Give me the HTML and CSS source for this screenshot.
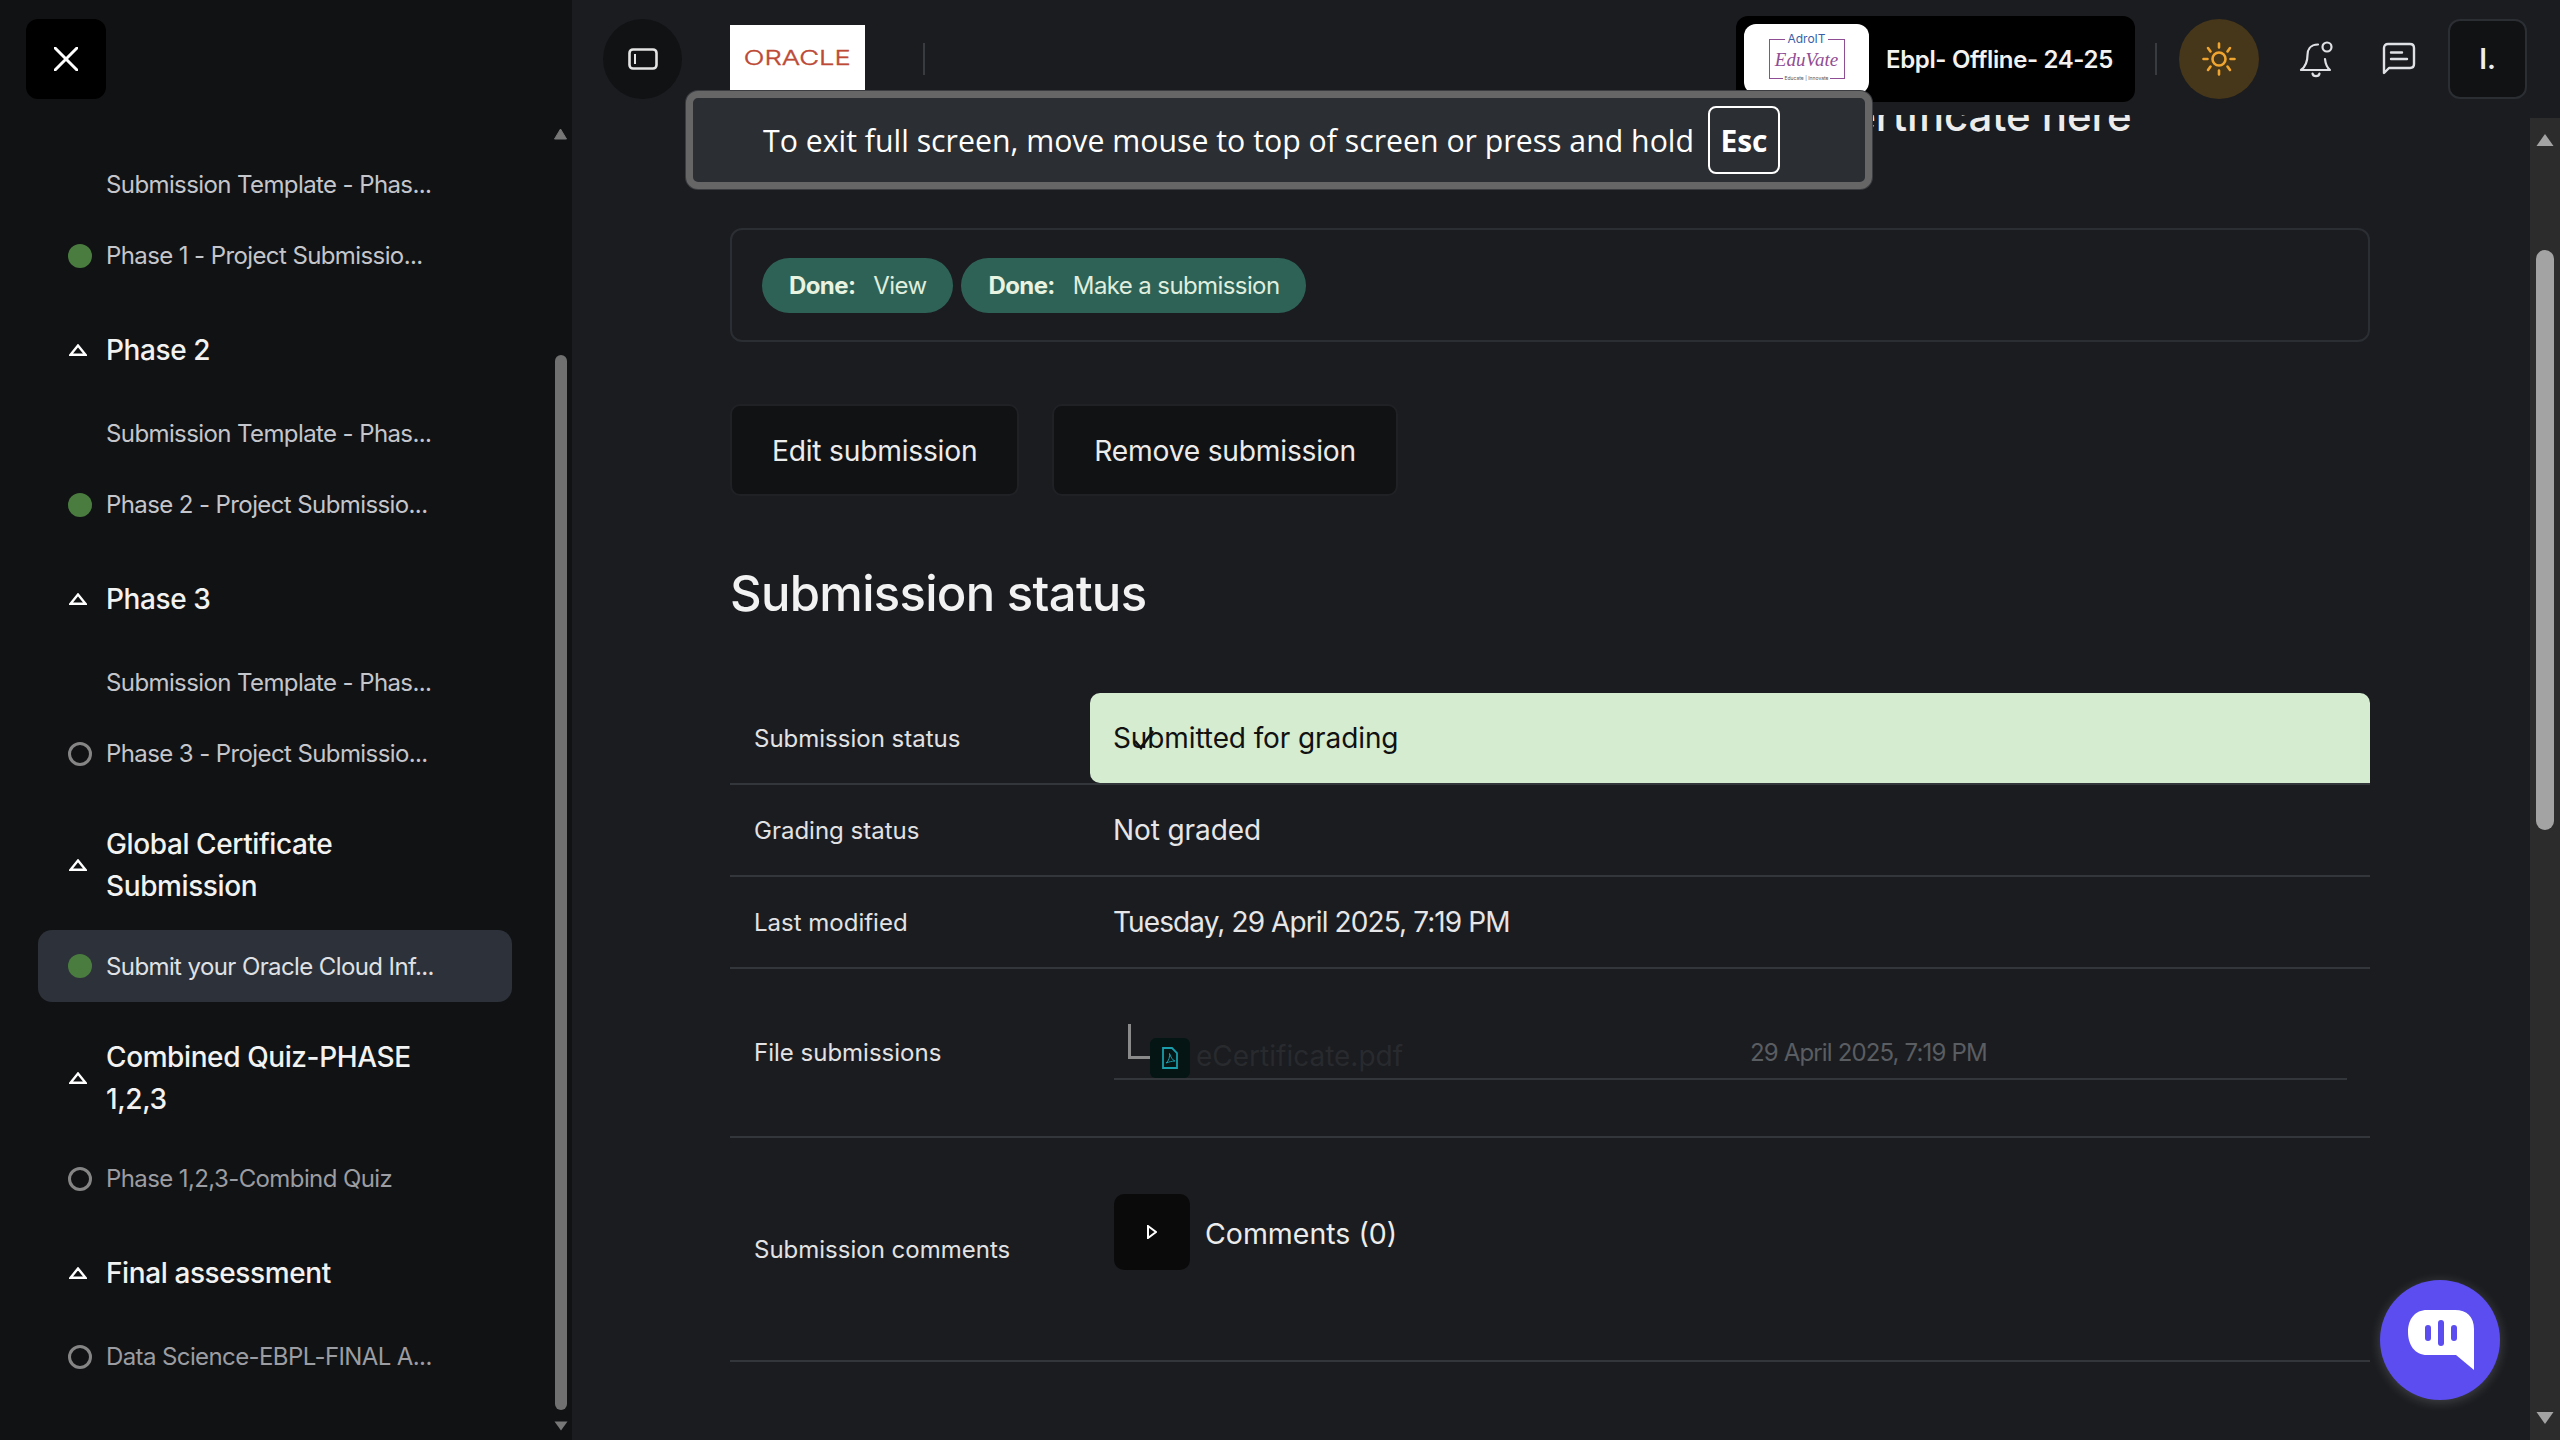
FILE: index.html
```html
<!DOCTYPE html>
<html lang="en">
<head>
<meta charset="utf-8">
<title>Submission</title>
<link rel="stylesheet" href="styles.css">
</head>
<body>
<div class="app">
  <aside class="sidebar">
    <div class="side-top">
      <button class="close-btn"><svg width="24" height="24" viewBox="0 0 24 24"><path d="M1 1 23 23M23 1 1 23" stroke="#fff" stroke-width="3" fill="none" stroke-linecap="round"/></svg></button>
    </div>
    <div class="side-body">
      <nav class="nav">
        <div class="item"><span class="dot blank"></span><span>Submission Template - Phas...</span></div>
        <div class="item"><span class="dot done"></span><span>Phase 1 - Project Submissio...</span></div>
        <div class="section"><svg class="caret" width="18" height="12" viewBox="0 0 18 12"><path d="M9 1.500 16.500 10.700H1.500Z" fill="none" stroke="#fff" stroke-width="2.400"/></svg><span class="section-text">Phase 2</span></div>
        <div class="item"><span class="dot blank"></span><span>Submission Template - Phas...</span></div>
        <div class="item"><span class="dot done"></span><span>Phase 2 - Project Submissio...</span></div>
        <div class="section"><svg class="caret" width="18" height="12" viewBox="0 0 18 12"><path d="M9 1.500 16.500 10.700H1.500Z" fill="none" stroke="#fff" stroke-width="2.400"/></svg><span class="section-text">Phase 3</span></div>
        <div class="item"><span class="dot blank"></span><span>Submission Template - Phas...</span></div>
        <div class="item"><span class="dot todo"></span><span>Phase 3 - Project Submissio...</span></div>
        <div class="section"><svg class="caret" width="18" height="12" viewBox="0 0 18 12"><path d="M9 1.500 16.500 10.700H1.500Z" fill="none" stroke="#fff" stroke-width="2.400"/></svg><span class="section-text">Global Certificate Submission</span></div>
        <div class="item active"><span class="dot done"></span><span>Submit your Oracle Cloud Inf...</span></div>
        <div class="section"><svg class="caret" width="18" height="12" viewBox="0 0 18 12"><path d="M9 1.500 16.500 10.700H1.500Z" fill="none" stroke="#fff" stroke-width="2.400"/></svg><span class="section-text">Combined Quiz-PHASE 1,2,3</span></div>
        <div class="item dim"><span class="dot todo"></span><span>Phase 1,2,3-Combind Quiz</span></div>
        <div class="section"><svg class="caret" width="18" height="12" viewBox="0 0 18 12"><path d="M9 1.500 16.500 10.700H1.500Z" fill="none" stroke="#fff" stroke-width="2.400"/></svg><span class="section-text">Final assessment</span></div>
        <div class="item dim"><span class="dot todo"></span><span>Data Science-EBPL-FINAL A...</span></div>
      </nav>
      <div class="side-scroll">
        <svg width="13" height="12" viewBox="0 0 13 12"><path d="M6.500 1 12.500 11H.5Z" fill="#777" stroke="#777" stroke-linejoin="round"/></svg>
        <div class="side-thumb"></div>
        <svg class="arrow-down" width="14" height="10" viewBox="0 0 14 10"><path d="M.5 .5H13.500L7 9.500Z" fill="#777"/></svg>
      </div>
    </div>
  </aside>

  <div class="main">
    <header class="topbar">
      <button class="round-btn"><svg width="30" height="22" viewBox="0 0 30 22"><rect x="1.500" y="1.500" width="27" height="19" rx="3.500" fill="none" stroke="#e4e4e4" stroke-width="2.600"/><path d="M7 6V16" stroke="#e4e4e4" stroke-width="2"/></svg></button>
      <div class="oracle"><span class="oracle-word">ORACLE</span></div>
      <span class="vr"></span>
      <div class="spacer"></div>
      <div class="org">
        <div class="org-logo">
          <div class="logo-frame">
            <span class="logo-top">AdroIT</span>
            <span class="logo-main">EduVate</span>
            <span class="logo-sub">Educate | Innovate</span>
          </div>
        </div>
        <span class="org-name">Ebpl- Offline- 24-25</span>
      </div>
      <span class="vr vr-right"></span>
      <button class="sun"><svg width="34" height="34" viewBox="0 0 34 34" fill="none" stroke="#efa52f" stroke-width="2.600" stroke-linecap="round"><circle cx="17" cy="17" r="6.500"/><path d="M17 1.500V5.500M17 28.500V32.500M1.500 17H5.500M28.500 17H32.500M6 6 8.500 9.500M28 6 25.500 9.500M6 28 8.500 24.500M28 28 25.500 24.500"/></svg></button>
      <svg class="bell" width="36" height="38" viewBox="0 0 36 38" fill="none" stroke="#dfe1e5" stroke-width="2.200" stroke-linecap="round" stroke-linejoin="round"><path d="M20 4.500C12 4.500 9.500 10 9.500 15C9.500 22 7 27 3 30H32C29 27.500 27.500 24 27 19"/><circle cx="29" cy="7" r="4.500"/><path d="M14.500 33.500C15 37 21 37 21.500 33.500"/></svg>
      <svg class="chat" width="34" height="34" viewBox="0 0 34 34" fill="none" stroke="#dfe1e5" stroke-width="2.400" stroke-linecap="round" stroke-linejoin="round"><path d="M2 31V6C2 3.500 3.500 2 6 2H28C30.500 2 32 3.500 32 6V22C32 24.500 30.500 26 28 26H7Z"/><path d="M9 10.500H20M9 17H25"/></svg>
      <div class="avatar">I.</div>
    </header>

    <div class="page">
      <div class="content">
        <h1 class="title">Submit your Oracle Cloud Infrastructure Foundations eCertificate here</h1>
        <div class="activity">
          <span class="pill"><b>Done:</b> View</span>
          <span class="pill"><b>Done:</b> Make a submission</span>
        </div>
        <div class="actions">
          <button class="btn">Edit submission</button>
          <button class="btn">Remove submission</button>
        </div>
        <h2 class="subtitle">Submission status</h2>
        <div class="table">
          <div class="row r-status">
            <div class="label">Submission status</div>
            <div class="value ok">Submitted for grading<svg class="tick" width="22" height="20" viewBox="0 0 22 20"><path d="M2 11 8 18 20 1" fill="none" stroke="#111" stroke-width="2.600"/></svg></div>
          </div>
          <div class="row r-plain">
            <div class="label">Grading status</div>
            <div class="value">Not graded</div>
          </div>
          <div class="row r-plain">
            <div class="label">Last modified</div>
            <div class="value tight">Tuesday, 29 April 2025, 7:19 PM</div>
          </div>
          <div class="row r-file">
            <div class="label">File submissions</div>
            <div class="file-cell">
              <div class="file-line">
                <span class="tree"></span>
                <span class="file-icon"><svg width="16" height="22" viewBox="0 0 16 22" fill="none" stroke="#1a9cab" stroke-width="1.800"><path d="M1 1H10L15 6V21H1Z"/><path d="M4 16C7 14 8 9 7.500 6.500C9 10 10 13 13 14C10 14 7 15 4 16Z" stroke-width="1"/></svg></span>
                <span class="file-name">eCertificate.pdf</span>
                <span class="file-date">29 April 2025, 7:19 PM</span>
              </div>
            </div>
          </div>
          <div class="row r-comments">
            <div class="label">Submission comments</div>
            <div class="comments">
              <span class="toggle"><svg width="10" height="14" viewBox="0 0 10 14"><path d="M1 1 9 7 1 13Z" fill="none" stroke="#fff" stroke-width="2"/></svg></span>
              <span class="comments-text">Comments (0)</span>
            </div>
          </div>
        </div>
      </div>
      <div class="page-scroll">
        <svg width="18" height="14" viewBox="0 0 18 14"><path d="M9 1 17.500 13H.5Z" fill="#a3a3a3"/></svg>
        <div class="page-thumb"></div>
        <svg class="arrow-down" width="18" height="14" viewBox="0 0 18 14"><path d="M.5 1H17.500L9 13Z" fill="#a3a3a3"/></svg>
      </div>
    </div>
  </div>
</div>

<div class="fs-banner">
  <span>To exit full screen, move mouse to top of screen or press and hold</span>
  <kbd class="esc">Esc</kbd>
</div>

<button class="fab"><svg width="68" height="62" viewBox="0 0 68 62"><path d="M20 1H48C60 1 67 8 67 20V61L49 46H20C8 46 1 36 1 23C1 10 8 1 20 1Z" fill="#fff"/><rect x="18" y="16" width="6" height="16" rx="3" fill="#5b4df0"/><rect x="31" y="11" width="6" height="26" rx="3" fill="#5b4df0"/><rect x="44" y="16" width="6" height="16" rx="3" fill="#5b4df0"/></svg></button>
</body>
</html>
```
FILE: styles.css
```css
* { box-sizing: border-box; }
html, body { margin: 0; padding: 0; }
body { width: 2560px; height: 1440px; overflow: hidden; background: #1a1c20; font-family: Inter, "Noto Sans", sans-serif; color: #e8e8e8; position: relative; }
button { font-family: inherit; border: 0; padding: 0; }
svg { display: block; flex: none; }

.app { display: flex; width: 2560px; height: 1440px; }

.sidebar { width: 572px; flex: none; background: #111214; display: flex; flex-direction: column; }
.side-top { height: 118px; padding: 19px 0 0 26px; flex: none; }
.close-btn { width: 80px; height: 80px; background: #000; border-radius: 12px; display: flex; align-items: center; justify-content: center; }
.side-body { flex: 1; display: flex; min-height: 0; }
.nav { width: 474px; margin: 31px 0 0 38px; flex: none; }
.item { height: 71px; display: flex; align-items: center; gap: 14px; padding-left: 30px; font-size: 24px; letter-spacing: -0.6px; color: #c4c6cb; border-radius: 14px; }
.item.active { background: #2d3139; color: #dfe1e5; height: 72px; }
.item.dim { color: #9b9da2; }
.dot { width: 24px; height: 24px; border-radius: 50%; flex: none; }
.dot.done { background: #4a7c3f; }
.dot.todo { border: 3px solid #858585; }
.section { min-height: 50px; display: flex; align-items: center; gap: 19px; padding-left: 31px; margin: 34px 0 23px; font-size: 28px; font-weight: 500; line-height: 42px; letter-spacing: -0.4px; color: #f2f2f2; }
.section-text { width: 350px; }

.side-scroll { width: 13px; margin-left: 42px; display: flex; flex-direction: column; align-items: center; padding-top: 10px; height: 1316px; }
.side-thumb { width: 12px; height: 1055px; margin-top: 215px; background: #707070; border-radius: 6px; flex: none; }
.side-scroll .arrow-down { margin-top: 11px; }

.main { flex: 1; min-width: 0; display: flex; flex-direction: column; }
.topbar { height: 115px; flex: none; display: flex; align-items: center; padding: 0 33px 0 31px; position: relative; z-index: 2; background: #1a1c20; }
.topbar > * { margin-top: 3px; }
.topbar > .oracle { margin-top: 0; }
.round-btn { width: 79px; height: 80px; border-radius: 50%; background: #111214; display: flex; align-items: center; justify-content: center; }
.oracle { width: 135px; height: 66px; margin-left: 48px; background: #fff; display: flex; align-items: center; justify-content: center; }
.oracle-word { font-size: 20px; font-weight: 300; color: #bd4a36; display: inline-block; transform: scaleX(1.36); -webkit-text-stroke: 0.4px #bd4a36; }
.vr { width: 2px; height: 32px; background: #383b40; margin-left: 58px; flex: none; }
.spacer { flex: 1; }
.org { width: 399px; height: 86px; background: #000; border-radius: 12px; display: flex; align-items: center; padding-left: 8px; gap: 16px; }
.org-logo { width: 125px; height: 70px; background: #fff; border-radius: 12px; display: flex; align-items: center; justify-content: center; }
.logo-frame { width: 76px; height: 40px; border: 1px solid #8f4d94; display: flex; flex-direction: column; align-items: center; justify-content: space-between; color: #8f4d94; position: relative; }
.logo-top { font-size: 12px; line-height: 10px; margin-top: -6px; background: #fff; padding: 0 2px; color: #3a5fa8; }
.logo-main { font-family: "Liberation Serif", serif; font-style: italic; font-size: 19px; line-height: 20px; }
.logo-sub { font-size: 5px; line-height: 6px; margin-bottom: -3px; background: #fff; padding: 0 2px; color: #555; }
.org-name { font-size: 24px; font-weight: 600; letter-spacing: -0.35px; color: #f2f2f2; white-space: nowrap; margin-left: 1px; }
.vr-right { margin-left: 20px; }
.sun { width: 80px; height: 80px; margin-left: 22px; border-radius: 50%; background: #46361a; display: flex; align-items: center; justify-content: center; }
.bell { margin-left: 39px; }
.chat { margin-left: 48px; }
.avatar { width: 79px; height: 80px; margin-left: 32px; background: #111214; border: 2px solid #2b2e33; border-radius: 12px; display: flex; align-items: center; justify-content: center; font-size: 28px; font-weight: 600; color: #eee; }

.page { flex: 1; min-height: 0; display: flex; overflow: hidden; }
.content { flex: 1; min-width: 0; padding: 0 0 0 158px; overflow: hidden; }
.title { width: 1640px; margin: -29px 0 82px; font-size: 42px; line-height: 60px; font-weight: 500; letter-spacing: -0.07px; white-space: nowrap; overflow: hidden; color: #ececec; }
.activity { width: 1640px; height: 114px; border: 2px solid #2b2e33; border-radius: 12px; display: flex; align-items: center; gap: 8px; padding: 0 30px; }
.pill { height: 55px; padding: 0 27px; border-radius: 28px; background: #2f6257; color: #dfeedd; display: flex; align-items: center; gap: 18px; font-size: 24px; letter-spacing: -0.6px; }
.pill b { font-weight: 700; color: #e8f3e0; }
.actions { display: flex; gap: 33px; margin-top: 62px; }
.btn { height: 92px; padding: 1px 40px 0; background: #111214; border: 2px solid #1f2125; border-radius: 10px; color: #ececec; font-size: 28.2px; letter-spacing: -0.22px; }
.subtitle { margin: 68px 0 69px; font-size: 49px; line-height: 60px; font-weight: 500; letter-spacing: -0.7px; color: #f2f2f2; }
.table { width: 1640px; }
.row { display: grid; grid-template-columns: 360px 1fr; border-bottom: 2px solid #33363a; align-items: center; }
.r-status { height: 92px; }
.r-plain { height: 92px; }
.r-file { height: 169px; }
.r-comments { height: 224px; }
.label { padding-left: 24px; font-size: 24px; color: #e2e2e4; }
.value { padding-left: 23px; font-size: 28px; letter-spacing: -0.1px; color: #e6e6e8; }
.value.tight { letter-spacing: -0.9px; }
.value.ok { height: 90px; align-self: start; background: #d5ecd0; color: #111; border-radius: 10px 10px 0 10px; display: flex; align-items: center; position: relative; }
.tick { position: absolute; left: 43px; top: 37px; }
.file-cell { padding: 0 23px 0 24px; }
.file-line { display: flex; align-items: flex-end; height: 54px; border-bottom: 2px solid #33363a; position: relative; }
.tree { width: 22px; height: 35px; margin: 0 0 19px 14px; border-left: 3px solid #8a8a8a; border-bottom: 3px solid #8a8a8a; flex: none; }
.file-icon { width: 40px; height: 40px; background: #041514; border-radius: 6px; display: flex; align-items: center; justify-content: center; flex: none; }
.file-name { margin-left: 6px; font-size: 28px; line-height: 36px; padding-bottom: 2px; color: #282a2e; width: 554px; flex: none; align-self: flex-end; margin-bottom: 2px; }
.file-date { font-size: 24px; line-height: 50px; letter-spacing: -0.85px; color: #5a5d61; }
.comments { display: flex; align-items: center; gap: 15px; padding-left: 24px; align-self: start; margin-top: 56px; }
.toggle { width: 76px; height: 76px; background: #0a0a0a; border-radius: 10px; display: flex; align-items: center; justify-content: center; }
.comments-text { font-size: 28.500px; color: #ececec; margin-top: 2px; }

.page-scroll { width: 30px; flex: none; margin-top: 3px; background: #2c2c2c; display: flex; flex-direction: column; align-items: center; padding-top: 15px; }
.page-thumb { width: 18px; height: 580px; margin-top: 103px; background: #a3a3a3; border-radius: 9px; flex: none; }
.page-scroll .arrow-down { margin-top: 581px; }

.fs-banner { position: absolute; left: 686px; top: 91px; width: 1186px; height: 98px; background: #2b2e33; border: 7px solid #666; border-radius: 12px; box-shadow: 0 0 0 1px #3a3c40; display: flex; align-items: center; padding-left: 70px; z-index: 5; font-family: "Open Sans", sans-serif; font-size: 30.250px; color: #fff; white-space: nowrap; }
.esc { margin-left: 14px; width: 72px; height: 68px; border: 2px solid #fff; border-radius: 8px; display: flex; align-items: center; justify-content: center; font-family: "Open Sans", sans-serif; font-size: 30px; font-weight: 700; }
.fab { position: absolute; left: 2380px; top: 1280px; width: 120px; height: 120px; border-radius: 50%; background: #5b4df0; box-shadow: 0 2px 12px rgba(255,255,255,.18); display: flex; align-items: center; justify-content: center; z-index: 4; padding: 0 0 0 2px; }
```
